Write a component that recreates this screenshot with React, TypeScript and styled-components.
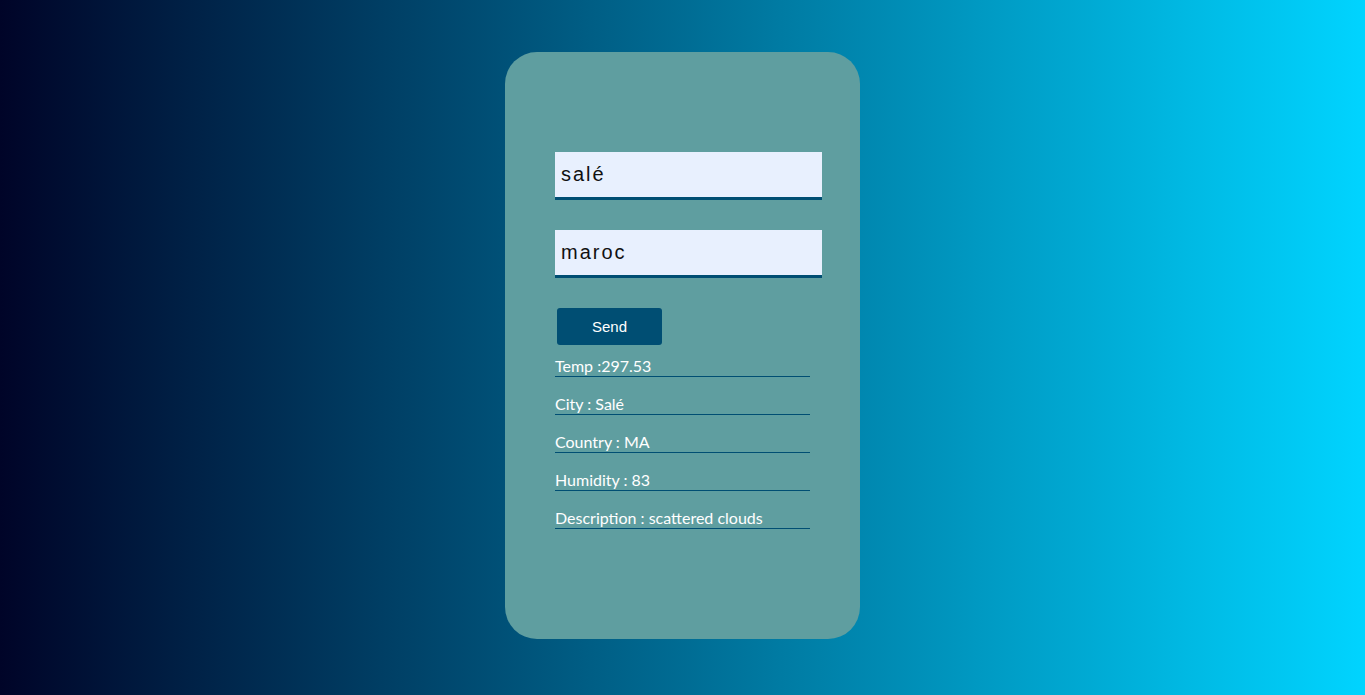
import styled, { createGlobalStyle } from "styled-components";

const GlobalStyle = createGlobalStyle`
  html, body {
    margin: 0;
    padding: 0;
  }
  body {
    min-height: 100vh;
    background: linear-gradient(to right, #000428, #00d4ff);
    font-family: "Liberation Sans", Arial, sans-serif;
  }
`;

const infos = [
  "Temp :297.53",
  "City : Salé",
  "Country : MA",
  "Humidity : 83",
  "Description : scattered clouds",
];

export default function App() {
  return (
    <>
      <GlobalStyle />
      <Page>
        <Card>
          <Field defaultValue="salé" />
          <Field defaultValue="maroc" />
          <SendButton>Send</SendButton>
          <Infos>
            {infos.map((t) => (
              <InfoLine key={t}>{t}</InfoLine>
            ))}
          </Infos>
        </Card>
      </Page>
    </>
  );
}

const Page = styled.div`
  height: 695px;
  display: flex;
  justify-content: center;
  align-items: flex-start;
  padding-top: 52px;
  box-sizing: border-box;
`;

const Card = styled.div`
  width: 355px;
  height: 587px;
  box-sizing: border-box;
  background-color: #5f9ea0;
  border-radius: 32px;
  padding: 100px 0 0 50px;
  display: flex;
  flex-direction: column;
  align-items: flex-start;
`;

const Field = styled.input`
  width: 267px;
  height: 48px;
  box-sizing: border-box;
  border: none;
  border-bottom: 3px solid #004e73;
  background-color: #e8f0fe;
  padding: 0 6px;
  margin: 0 0 30px;
  font-family: "Liberation Sans", Arial, sans-serif;
  font-size: 20px;
  letter-spacing: 2px;
  color: #111;
  outline: none;
`;

const SendButton = styled.button`
  width: 105px;
  height: 37px;
  margin: 0 0 0 2px;
  border: none;
  border-radius: 3px;
  background-color: #004e73;
  color: #fff;
  font-family: "Liberation Sans", Arial, sans-serif;
  font-size: 15px;
  cursor: pointer;
`;

const Infos = styled.div`
  margin-top: 12px;
  display: flex;
  flex-direction: column;
  gap: 18px;
`;

const InfoLine = styled.div`
  width: 255px;
  height: 19px;
  line-height: 18px;
  border-bottom: 1px solid #004e73;
  color: #fff;
  font-family: Lato, "Open Sans", sans-serif;
  font-size: 16px;
  white-space: nowrap;
`;
